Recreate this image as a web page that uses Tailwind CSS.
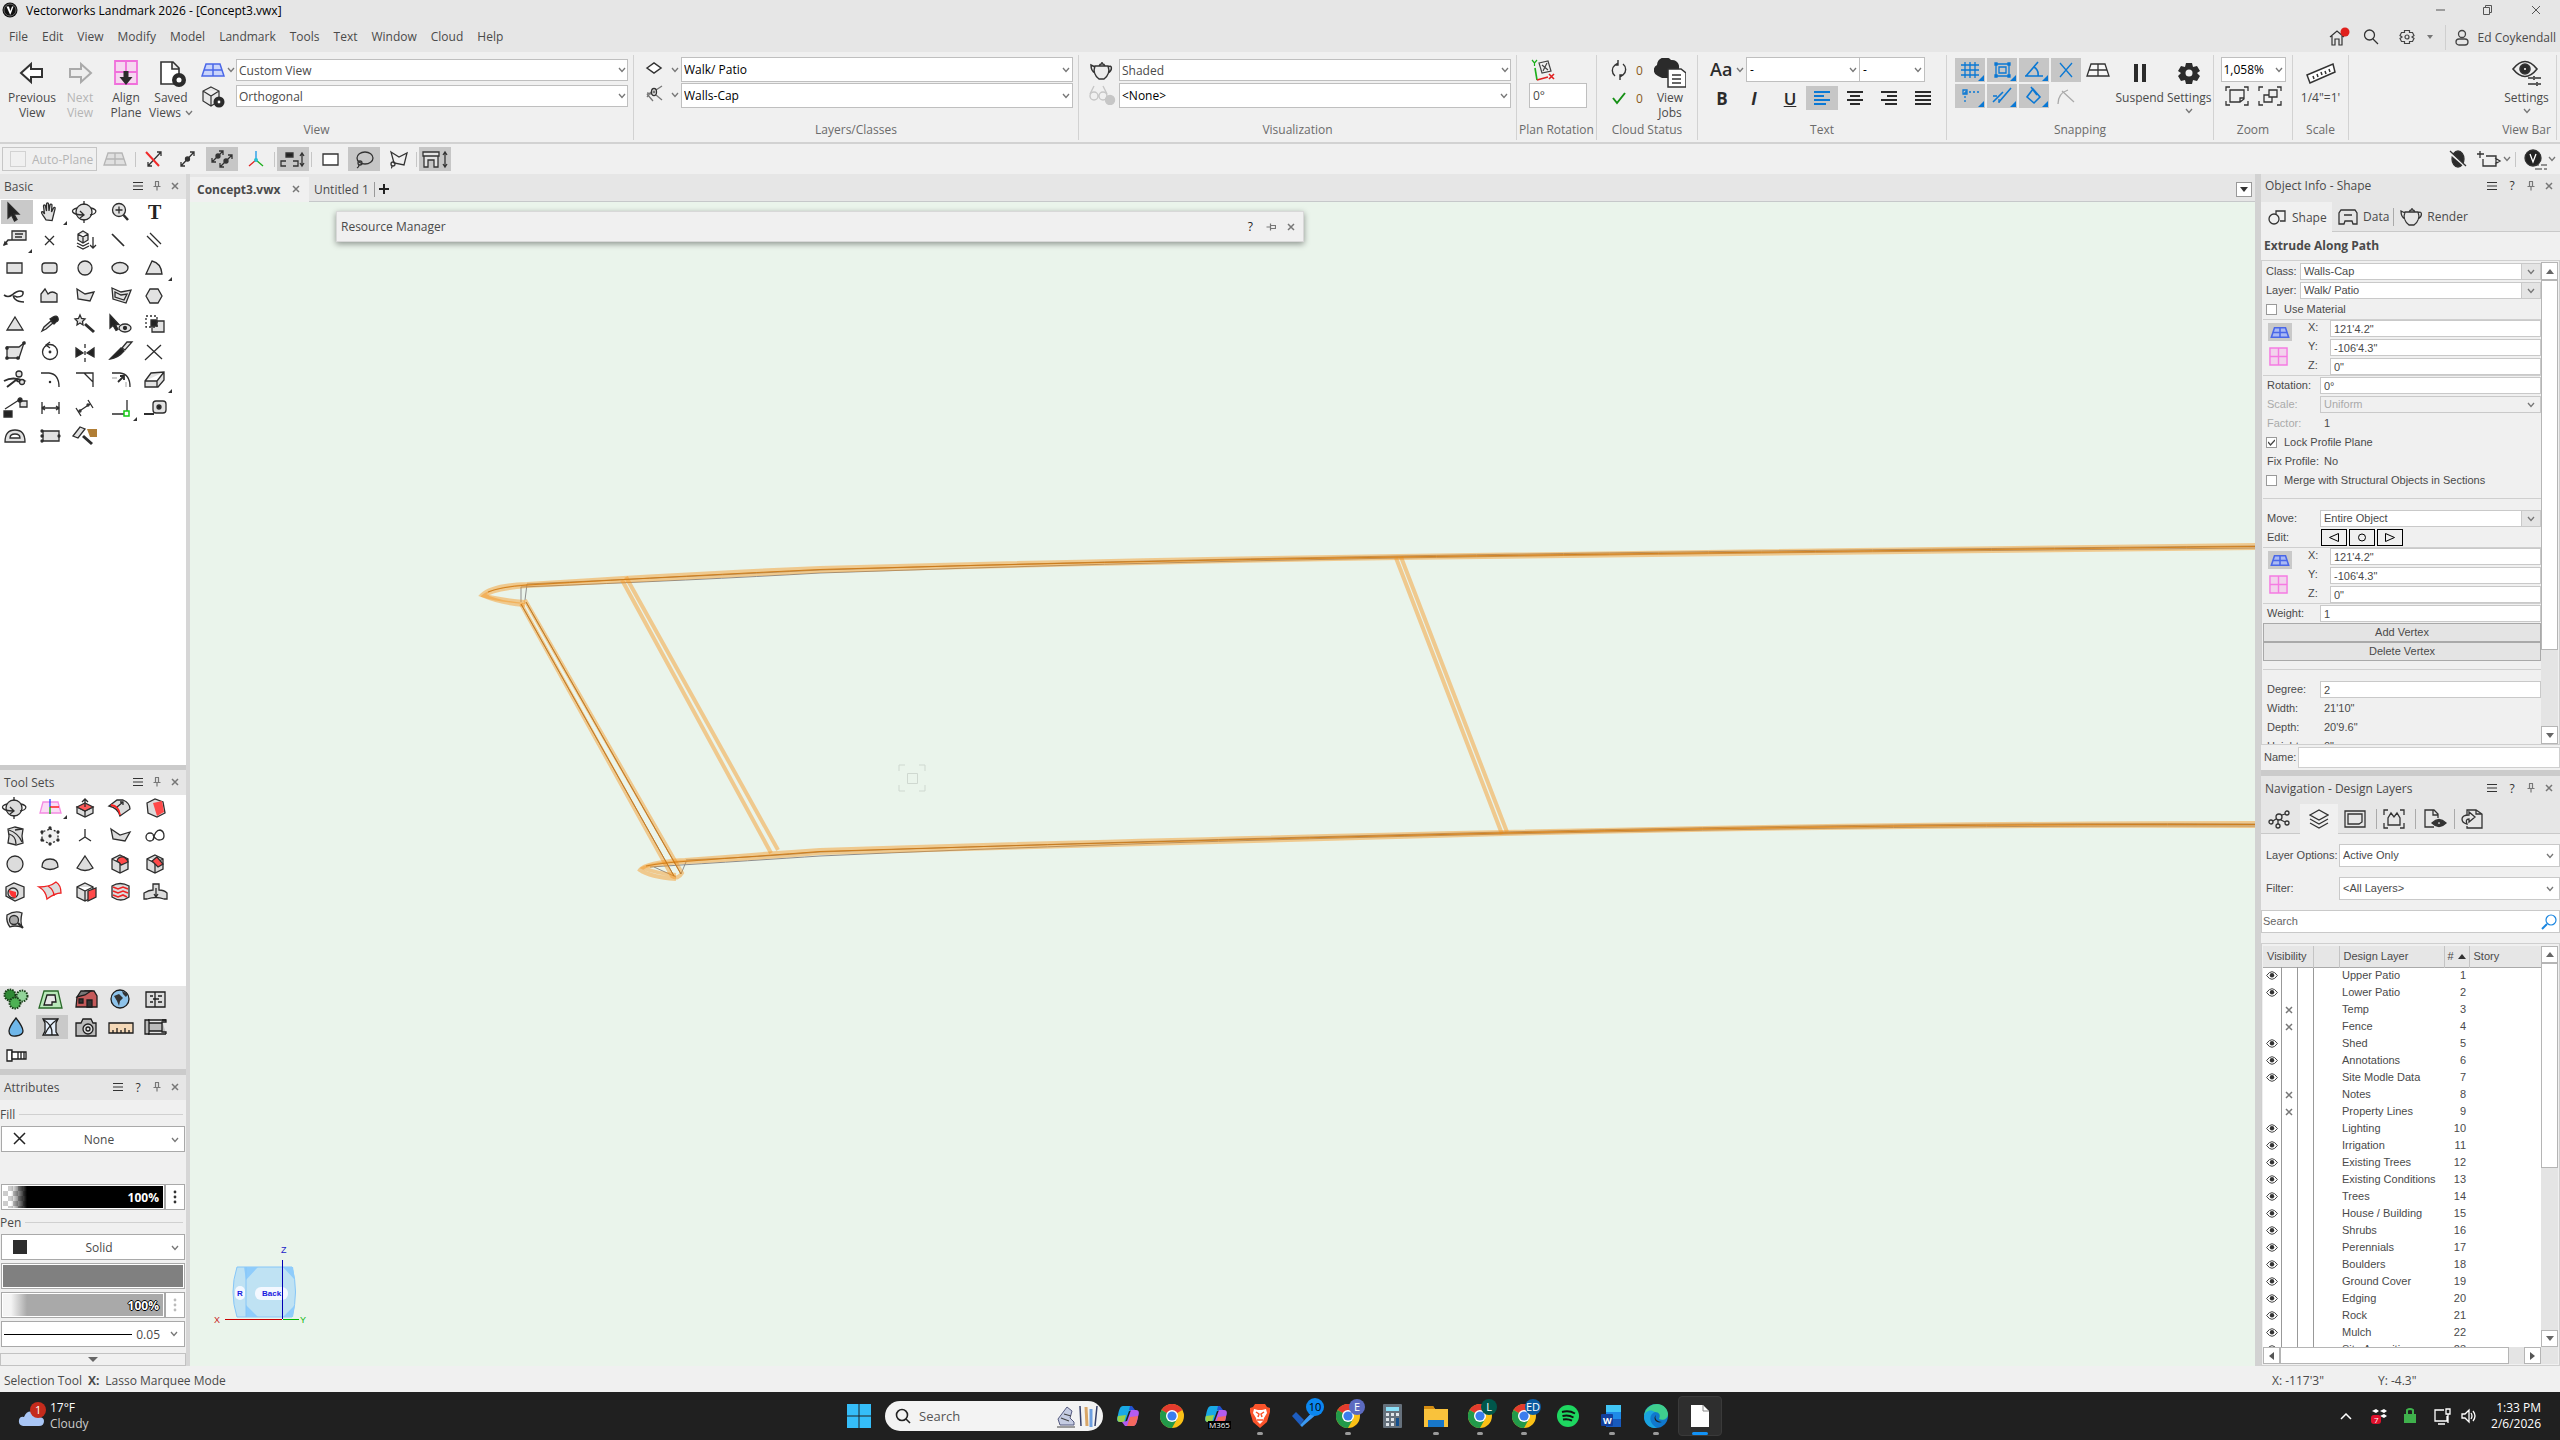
<!DOCTYPE html>
<html lang="en">

<head>
	<meta charset="UTF-8">
	<meta name="viewport" content="width=device-width, initial-scale=1.0">
	<title>Vectorworks Landmark 2026 - [Concept3.vwx]</title>
	<script src="https://cdn.jsdelivr.net/npm/@tailwindcss/browser@4"></script>
</head>

<body class="h-screen flex flex-col overflow-hidden bg-[#e6e6e6] font-['Open_Sans','Noto_Sans',sans-serif] text-[12px] leading-[15px] text-[#4a4a4a]">

	<!-- Shared icons -->
	<svg class="hidden">
		<symbol id="chev" viewBox="0 0 8 6"><path d="M1 1l3 3.500 3-3.500" fill="none" stroke="#777" stroke-width="1.300" /></symbol>
		<symbol id="menu" viewBox="0 0 10 10"><path d="M0 1.500h10M0 5h10M0 8.500h10" stroke="#333" stroke-width="1.200" /></symbol>
		<symbol id="pin" viewBox="0 0 8 10"><path d="M2 .5h4M2.500.5v5M5.500.5v5M.5 5.500h7M4 5.500v4" fill="none" stroke="#777" stroke-width="1.200" /></symbol>
		<symbol id="close" viewBox="0 0 8 8"><path d="M1 1l6 6M7 1l-6 6" stroke="#777" stroke-width="1.500" /></symbol>
		<symbol id="eye" viewBox="0 0 12 9"><path d="M.6 4.500q5.400-7.600 10.800 0q-5.400 7.600-10.800 0z" fill="#fff" stroke="#444" /><circle cx="6" cy="4.300" r="2.200" fill="#333" /></symbol>
		<symbol id="plane" viewBox="0 0 24 14"><path d="M5 1h14l4 12H1zM3 7h18M12 1v12" /></symbol>
		<symbol id="front" viewBox="0 0 20 20"><path d="M1 1h18v18H1zM10 1v18M1 10h18" /></symbol>
		<symbol id="teapot" viewBox="0 0 24 20"><path d="M5 5h13c2 5 0 10-4 13H9C5 15 3 10 5 5zM5 6L1 4c0 4 2 7 4 8M18 6c4-3 5 3 0 6M9 5c1-3 5-3 6 0M12 1v2" /></symbol>
		<symbol id="orbit" viewBox="0 0 28 24"><circle cx="13" cy="12" r="8" /><path fill="none" d="M6 8C-2 10 1 15 12 15M20 8c8 2 5 6-1 7M13 1v4M13 19v4M9 11l4 4-4 3" /></symbol>
		<symbol id="cube" viewBox="0 0 28 24"><path d="M14 3l8 4v10l-8 4-8-4V7zM6 7l8 4 8-4M14 11v10" /></symbol>
		<symbol id="chrome" viewBox="0 0 24 24"><circle cx="12" cy="12" r="12" fill="#fbc116" /><path d="M12 12L1.600 6A12 12 0 0122.400 6z" fill="#e33b2e" /><path d="M12 12L1.600 6A12 12 0 0012 24l5-9z" fill="#229a4a" /><circle cx="12" cy="12" r="6" fill="#fff" /><circle cx="12" cy="12" r="4.600" fill="#3b7ded" /></symbol>
		<symbol id="copilot" viewBox="0 0 24 24"><path d="M7 2h8l3 4-5 1-4 11H4c-4 0-3-4-2-7C3 6 4 2 7 2z" fill="#19a9e5" /><path d="M2 12l8-1-2 7H4c-3 0-3-3-2-6z" fill="#9ad14b" /><path d="M17 22H9l-3-4 5-1 4-11h5c4 0 3 4 2 7-1 5-2 9-5 9z" fill="#b45cf0" /><path d="M22 12l-8 1-3 9h6c3 0 4-5 5-10z" fill="#f4685e" /><path d="M14 2h2l3 4h-6z" fill="#2453d3" /></symbol>
	</svg>

	<!-- Title bar -->
	<header class="flex h-[22px] shrink-0 items-center justify-between pr-[18px] pb-[2px] pl-[2px] text-black">
		<h1 class="flex items-center gap-2">
			<svg class="h-4 w-4" viewBox="0 0 16 16"><circle cx="8" cy="8" r="7.500" fill="#111" /><circle cx="8" cy="8" r="6" fill="none" stroke="#999" stroke-width=".6" /><path d="M4.500 4.500h2.500l1.300 4.500L10 4.500h1.500l-3 8H8z" fill="#fff" /></svg>
			Vectorworks Landmark 2026 - [Concept3.vwx]
		</h1>
		<div class="flex items-center gap-9">
			<button aria-label="Minimize"><svg class="h-3 w-3" viewBox="0 0 12 12"><path d="M2 6h9" stroke="#555" /></svg></button>
			<button aria-label="Restore"><svg class="h-3 w-3" viewBox="0 0 12 12" fill="none" stroke="#555"><path d="M1.500 3.500h6v7h-6zM3.500 3.500v-2h6v7h-2" /></svg></button>
			<button aria-label="Close"><svg class="h-3 w-3" viewBox="0 0 12 12"><path d="M2 2l8 8M10 2l-8 8" stroke="#555" /></svg></button>
		</div>
	</header>

	<!-- Menu -->
	<nav class="flex h-[30px] shrink-0 items-center pr-1 pl-[9px]">
		<div class="flex gap-[14px] pb-px">
			<button>File</button><button>Edit</button><button>View</button><button>Modify</button><button>Model</button><button>Landmark</button><button>Tools</button><button>Text</button><button>Window</button><button>Cloud</button><button>Help</button>
		</div>
		<div class="ml-auto flex h-full items-center">
			<button class="mr-3" aria-label="Home"><svg class="h-5 w-6" viewBox="0 0 24 20" fill="none" stroke="#333" stroke-width="1.200"><path d="M3 10l7-6 7 6M5 9v9h3v-6h4v6h3V9" /><circle cx="18" cy="5" r="4.500" fill="#e0201c" stroke="none" /></svg></button>
			<button class="mr-5" aria-label="Search"><svg class="h-4 w-4" viewBox="0 0 16 16" fill="none" stroke="#333" stroke-width="1.300"><circle cx="6.500" cy="6" r="5" /><path d="M10 10l5 5" /></svg></button>
			<button class="mr-3 flex items-center gap-3" aria-label="Preferences"><svg class="h-4 w-4" viewBox="0 0 16 16" fill="none" stroke="#444" stroke-width="1.200"><path d="M5.500 1.500h5v2l3 0 1.500 3-2 1.500 2 1.500-1.500 3h-3v2h-5v-2h-3L1 9.500 3 8 1 6.500l1.500-3h3z" /><circle cx="8" cy="8" r="2" /></svg><svg class="h-[5px] w-[6px]" viewBox="0 0 6 5"><path d="M0 0h6L3 4z" fill="#777" /></svg></button>
			<button class="flex h-[25px] items-center gap-2 border-l border-[#cfcfcf] pl-2"><svg class="h-[17px] w-4" viewBox="0 0 16 17" fill="none" stroke="#444" stroke-width="1.300"><circle cx="8" cy="5" r="3.500" /><rect x="2" y="10" width="12" height="6" rx="3" /></svg>Ed Coykendall</button>
		</div>
	</nav>

	<!-- View bar -->
	<div class="flex h-[92px] shrink-0 border-b-2 border-[#d2d2d2] bg-[#f0f0f0] pt-[3px] pb-[2px]">
		<section class="flex w-[634px] shrink-0 flex-col border-r border-[#d2d2d2]">
			<div class="flex h-[67px] pl-2">
				<button class="flex w-12 flex-col items-center pt-[3px]"><svg class="h-8 w-8 shrink-0" viewBox="0 0 32 32" fill="#fff" stroke="#333" stroke-width="2"><path d="M5 15l10-9v5h11v8H15v5z" /></svg>Previous<br>View</button>
				<button class="flex w-12 flex-col items-center pt-[3px] text-[#b5b5b5]"><svg class="h-8 w-8 shrink-0" viewBox="0 0 32 32" fill="#eee" stroke="#aaa" stroke-width="2"><path d="M27 15L17 6v5H6v8h11v5z" /></svg>Next<br>View</button>
				<button class="flex w-11 flex-col items-center pt-[3px]"><svg class="h-8 w-8 shrink-0" viewBox="0 0 32 32"><path d="M5 3h22v23H5zM16 3v23M5 14h22" fill="#f6d6f0" stroke="#f06fdb" stroke-width="1.800" /><path d="M13.500 13h5v6h4L16 27l-6.500-8h4z" fill="#2b2b2b" /></svg>Align<br>Plane</button>
				<button class="flex w-[46px] flex-col items-center pt-[3px]"><svg class="h-8 w-8 shrink-0" viewBox="0 0 32 32" fill="#fff" stroke="#333" stroke-width="1.600"><path d="M6 4h12l6 6v16H6zM17 4v7h7" /><circle cx="24" cy="22" r="7" fill="#2b2b2b" stroke="none" /><circle cx="24" cy="22" r="2.500" stroke="none" /></svg>Saved<span class="flex items-center gap-1">Views<svg class="h-[6px] w-2"><use href="#chev" /></svg></span></button>
				<div class="flex w-[42px] flex-col pt-1 pl-[7px]">
					<button class="flex h-[22px] items-center gap-[2px]" aria-label="Standard views"><svg class="h-[14px] w-6 fill-[#c9d4fb] stroke-[#4a67e8] stroke-[1.5]"><use href="#plane" /></svg><svg class="h-[6px] w-2"><use href="#chev" /></svg></button>
					<button class="mt-[3px] h-[26px]" aria-label="Projection"><svg class="h-6 w-6" viewBox="0 0 24 24" fill="#e8e8e8" stroke="#333" stroke-width="1.200"><path d="M10 2l8 4v10l-8 5-8-5V6zM2 6l8 5 8-5M10 11v10" /><circle cx="18" cy="17" r="5.500" fill="#2b2b2b" stroke="none" /><circle cx="18" cy="17" r="2" fill="#fff" /></svg></button>
				</div>
				<div class="flex w-[392px] flex-col gap-1 pt-1">
					<label class="relative flex h-[22px]"><select aria-label="View" class="w-full appearance-none border border-[#bfbfbf] bg-white pl-[2px]"><option>Custom View</option></select><svg class="absolute top-2 right-[2px] h-[6px] w-2"><use href="#chev" /></svg></label>
					<label class="relative flex h-[22px]"><select aria-label="Projection" class="w-full appearance-none border border-[#bfbfbf] bg-white pl-[2px]"><option>Orthogonal</option></select><svg class="absolute top-2 right-[2px] h-[6px] w-2"><use href="#chev" /></svg></label>
				</div>
			</div>
			<h2 class="text-center text-[#6b6b6b]">View</h2>
		</section>
		<section class="flex w-[445px] shrink-0 flex-col border-r border-[#d2d2d2]">
			<div class="flex h-[67px] pt-[2px]">
				<div class="flex w-[47px] flex-col pl-[10px]">
					<button class="flex h-[25px] items-center gap-[7px]" aria-label="Layers"><svg class="h-5 w-5" viewBox="0 0 20 20" fill="#fff" stroke="#333" stroke-width="1.500"><path d="M3 8l7-5 7 5-7 5z" /></svg><svg class="h-[6px] w-2"><use href="#chev" /></svg></button>
					<button class="flex h-[25px] items-center gap-[7px]" aria-label="Classes"><svg class="h-5 w-5" viewBox="0 0 20 20" fill="none" stroke="#777" stroke-width="1.300"><path d="M3 8l5 1M3 9l6 7M12 10l6 5M12 5l6-4M3 12l4-5" /><ellipse cx="10" cy="7" rx="2.500" ry="3.500" stroke="#333" /><circle cx="10" cy="7" r=".8" fill="#333" /></svg><svg class="h-[6px] w-2"><use href="#chev" /></svg></button>
				</div>
				<div class="flex w-[392px] flex-col gap-px text-black">
					<label class="relative flex h-[25px]"><select aria-label="Active layer" class="w-full appearance-none border border-[#bfbfbf] bg-white pl-[2px]"><option>Walk/ Patio</option></select><svg class="absolute top-[10px] right-[3px] h-[6px] w-2"><use href="#chev" /></svg></label>
					<label class="relative flex h-[25px]"><select aria-label="Active class" class="w-full appearance-none border border-[#bfbfbf] bg-white pl-[2px]"><option>Walls-Cap</option></select><svg class="absolute top-[10px] right-[3px] h-[6px] w-2"><use href="#chev" /></svg></label>
				</div>
			</div>
			<h2 class="text-center text-[#6b6b6b]">Layers/Classes</h2>
		</section>
		<section class="flex w-[438px] shrink-0 flex-col border-r border-[#d2d2d2]">
			<div class="flex h-[67px] pt-[2px]">
				<div class="flex w-10 flex-col items-center pl-[6px]">
					<svg class="mt-1 h-5 w-6 fill-[#ececec] stroke-[#333] stroke-[1.5]"><use href="#teapot" /></svg>
					<svg class="mt-1 h-5 w-7" viewBox="0 0 28 20" fill="none" stroke="#c6c6c6" stroke-width="1.400"><circle cx="6" cy="11" r="4" /><circle cx="15" cy="11" r="4" /><path d="M2 9l4-8M19 9l-4-8M10 11h1" /><circle cx="22" cy="15" r="4.500" fill="#c6c6c6" /></svg>
				</div>
				<div class="flex w-[392px] flex-col pt-[2px]">
					<label class="relative flex h-[22px]"><select aria-label="Render mode" class="w-full appearance-none border border-[#bfbfbf] bg-white pl-[2px]"><option>Shaded</option></select><svg class="absolute top-2 right-[2px] h-[6px] w-2"><use href="#chev" /></svg></label>
					<label class="relative mt-[2px] flex h-[25px] text-black"><select aria-label="Data visualization" class="w-full appearance-none border border-[#bfbfbf] bg-white pl-[2px]"><option>&lt;None&gt;</option></select><svg class="absolute top-[10px] right-[3px] h-[6px] w-2"><use href="#chev" /></svg></label>
				</div>
			</div>
			<h2 class="text-center text-[#6b6b6b]">Visualization</h2>
		</section>
		<section class="flex w-20 shrink-0 flex-col border-r border-[#d2d2d2]">
			<div class="flex h-[67px] flex-col pl-3">
				<svg class="mt-1 h-6 w-7" viewBox="0 0 28 24" fill="none" stroke="#444" stroke-width="1.200"><path d="M10 4l9-2 3 10-9 2zM13 6l6 5M18 4l-4 8" /><path d="M6 9l2 12" stroke="#1aae1a" stroke-width="1.600" /><path d="M8 21l11-3M20 15l5 5M25 15l-5 5" stroke="#e01f1f" stroke-width="1.600" /><path d="M3 1l2.500 3L8 1M5.500 4v3" stroke="#1aae1a" /></svg>
				<input aria-label="Rotation angle" value="0°" class="h-[25px] w-[58px] border border-[#bfbfbf] bg-white pl-[3px]">
			</div>
			<h2 class="text-center whitespace-nowrap text-[#6b6b6b]">Plan Rotation</h2>
		</section>
		<section class="flex w-[101px] shrink-0 flex-col border-r border-[#d2d2d2]">
			<div class="flex h-[67px]">
				<div class="flex w-[49px] flex-col gap-2 pt-[5px] pl-3">
					<span class="flex items-center gap-[7px] text-[#8a5a20]"><svg class="h-5 w-5" viewBox="0 0 20 20" fill="none" stroke="#333" stroke-width="1.400"><path d="M6 16a7 7 0 010-11l3-2M9 0v5H6M14 4a7 7 0 010 11l-3 2M11 20v-5h3" /></svg>0</span>
					<span class="flex items-center gap-[7px] text-[#8a5a20]"><svg class="h-5 w-5" viewBox="0 0 20 20" fill="none" stroke="#159015" stroke-width="2"><path d="M4 10l4 5 8-10" /></svg>0</span>
				</div>
				<button class="flex w-12 flex-col items-center pt-[3px]"><svg class="h-8 w-8 shrink-0" viewBox="0 0 32 32" fill="#2b2b2b"><path d="M4 18a6 6 0 01-1-11 8 8 0 0114-5 7 7 0 018 8v4H14v6H8z" /><path d="M14 11h13l5 4v14H14z" fill="#fff" stroke="#333" stroke-width="1.500" /><path d="M18 17h9M18 21h9M18 25h9" stroke="#333" stroke-width="1.500" /></svg>View<br>Jobs</button>
			</div>
			<h2 class="text-center text-[#6b6b6b]">Cloud Status</h2>
		</section>
		<section class="flex w-[249px] shrink-0 flex-col border-r border-[#d2d2d2]">
			<div class="flex h-[67px] flex-col gap-1 pt-[2px] pl-3">
				<div class="flex items-center text-black">
					<button class="flex w-9 items-center gap-1 text-[18px] font-semibold text-[#2b2b2b]">Aa<svg class="h-[6px] w-2 shrink-0"><use href="#chev" /></svg></button>
					<label class="relative flex h-[25px] w-[114px]"><select aria-label="Font" class="w-full appearance-none border border-[#bfbfbf] bg-white pl-[3px]"><option>-</option></select><svg class="absolute top-[10px] right-[3px] h-[6px] w-2"><use href="#chev" /></svg></label>
					<label class="relative flex h-[25px] w-[65px]"><select aria-label="Font size" class="w-full appearance-none border border-l-0 border-[#bfbfbf] bg-white pl-[3px]"><option>-</option></select><svg class="absolute top-[10px] right-[3px] h-[6px] w-2"><use href="#chev" /></svg></label>
				</div>
				<div class="flex h-6 items-center text-[17px] text-[#2b2b2b]">
					<button class="w-6 font-bold">B</button><button class="ml-2 w-6 font-bold italic">I</button><button class="ml-3 w-6 font-semibold underline">U</button>
					<button class="ml-1 flex h-6 w-8 items-center justify-center bg-[#c6c6c6]" aria-label="Align left"><svg class="h-4 w-4" viewBox="0 0 16 16"><path d="M0 2h16M0 6h10M0 10h16M0 14h12" stroke="#0a78d4" stroke-width="1.800" /></svg></button>
					<button class="ml-[9px] w-4" aria-label="Align center"><svg class="h-4 w-4" viewBox="0 0 16 16"><path d="M0 2h16M3 6h10M0 10h16M3 14h10" stroke="#2b2b2b" stroke-width="1.800" /></svg></button>
					<button class="ml-[18px] w-4" aria-label="Align right"><svg class="h-4 w-4" viewBox="0 0 16 16"><path d="M0 2h16M6 6h10M0 10h16M4 14h12" stroke="#2b2b2b" stroke-width="1.800" /></svg></button>
					<button class="ml-[18px] w-4" aria-label="Justify"><svg class="h-4 w-4" viewBox="0 0 16 16"><path d="M0 2h16M0 6h16M0 10h16M0 14h16" stroke="#2b2b2b" stroke-width="1.800" /></svg></button>
				</div>
			</div>
			<h2 class="text-center text-[#6b6b6b]">Text</h2>
		</section>
		<section class="flex w-[267px] shrink-0 flex-col border-r border-[#d2d2d2]">
			<div class="flex h-[67px] pl-2">
				<div class="grid grid-cols-[30px_30px_30px_30px_30px] content-start gap-[2px] pt-[3px] fill-none stroke-[#0a78d4] stroke-[1.3]">
					<button class="h-6 bg-[#c6c6c6]" aria-label="Snap to grid"><svg viewBox="0 0 30 24"><path d="M6 7h18M6 12h18M6 17h18M10 4v16M15 4v16M20 4v16" /><path d="M29 17v6h-6z" fill="#0a78d4" stroke="none" /></svg></button>
					<button class="h-6 bg-[#c6c6c6]" aria-label="Snap to object"><svg viewBox="0 0 30 24"><path d="M9 6h13v12H9zM12 9h7v6h-7z" /><path d="M8 5h2v2H8zM21 5h2v2h-2zM8 17h2v2H8zM21 17h2v2h-2z" fill="#0a78d4" /><path d="M29 17v6h-6z" fill="#0a78d4" stroke="none" /></svg></button>
					<button class="h-6 bg-[#c6c6c6]" aria-label="Snap to angle"><svg viewBox="0 0 30 24"><path d="M6 18h18M7 18L19 4M15 9a9 9 0 014 9" stroke-width="1.600" /><path d="M29 17v6h-6z" fill="#0a78d4" stroke="none" /></svg></button>
					<button class="h-6 bg-[#c6c6c6]" aria-label="Snap to intersection"><svg viewBox="0 0 30 24"><path d="M9 5l12 14M21 5L9 19" /></svg></button>
					<button class="h-6 fill-[#f8f8f8] stroke-[#333]" aria-label="Snap to working plane"><svg class="mx-auto h-[14px] w-6"><use href="#plane" /></svg></button>
					<button class="h-6 bg-[#c6c6c6]" aria-label="Smart points"><svg viewBox="0 0 30 24"><path d="M10 8v11M10 8h14" stroke-dasharray="2 2" /><path d="M8 6h4v4H8z" /><path d="M29 17v6h-6z" fill="#0a78d4" stroke="none" /></svg></button>
					<button class="h-6 bg-[#c6c6c6]" aria-label="Smart edge"><svg viewBox="0 0 30 24"><path d="M6 18L16 8M12 18L24 4" stroke-width="1.600" /><path d="M6 12h4M12 15v4" /><path d="M29 17v6h-6z" fill="#0a78d4" stroke="none" /></svg></button>
					<button class="h-6 bg-[#c6c6c6]" aria-label="Snap to distance"><svg viewBox="0 0 30 24"><path d="M14 5l7 8-6 6-7-6zM12 3l6 8" stroke-width="1.600" /><path d="M29 17v6h-6z" fill="#0a78d4" stroke="none" /></svg></button>
					<button class="h-6 stroke-[#aaa]" aria-label="Snap to tangent"><svg viewBox="0 0 30 24"><path d="M7 20c0-8 4-12 10-14M11 7l12 11" /></svg></button>
				</div>
				<button class="ml-px flex w-[52px] flex-col items-center pt-[3px]"><svg class="h-8 w-8 shrink-0" viewBox="0 0 32 32"><path d="M10 6h4v18h-4zM18 6h4v18h-4z" fill="#2b2b2b" /></svg>Suspend</button>
				<button class="flex w-12 flex-col items-center pt-[3px]"><svg class="h-8 w-8 shrink-0" viewBox="0 0 32 32"><path d="M13 5h6l1 4 4-1 3 5-3 2 3 3-3 5-4-1-1 4h-6l-1-4-4 1-3-5 3-3-3-2 3-5 4 1z" fill="#2b2b2b" /><circle cx="16" cy="15" r="3.500" fill="#f0f0f0" /></svg>Settings<svg class="mt-[3px] h-[6px] w-2"><use href="#chev" /></svg></button>
			</div>
			<h2 class="text-center text-[#6b6b6b]">Snapping</h2>
		</section>
		<section class="flex w-[79px] shrink-0 flex-col border-r border-[#d2d2d2]">
			<div class="flex h-[67px] flex-col items-center pt-[2px] text-black">
				<label class="relative flex h-[25px] w-[65px]"><select aria-label="Zoom" class="w-full appearance-none border border-[#bfbfbf] bg-white pl-[2px]"><option>1,058%</option></select><svg class="absolute top-[10px] right-[3px] h-[6px] w-2"><use href="#chev" /></svg></label>
				<div class="mt-1 flex gap-[9px] fill-none stroke-[#333] stroke-[1.3]">
					<button aria-label="Fit to page"><svg class="h-5 w-6" viewBox="0 0 24 20"><path d="M1 5V1h4M19 1h4v4M23 15v4h-4M5 19H1v-4M5 4h14v9l-4 3H5zM19 12h-4v4" /></svg></button>
					<button aria-label="Fit to objects"><svg class="h-5 w-6" viewBox="0 0 24 20"><path d="M1 5V1h4M19 1h4v4M23 15v4h-4M5 19H1v-4M11 4h8v7h-8zM11 9H6v7h8v-5" /></svg></button>
				</div>
			</div>
			<h2 class="text-center text-[#6b6b6b]">Zoom</h2>
		</section>
		<section class="flex w-14 shrink-0 flex-col border-r border-[#d2d2d2]">
			<div class="flex h-[67px] flex-col items-center pt-[3px]"><svg class="h-8 w-8 shrink-0" viewBox="0 0 32 32" fill="#fff" stroke="#333" stroke-width="1.500"><path d="M2 17L28 6l2 8L5 25zM8 18l1 3M12 16l1 3M16 14l1 3M20 13l1 3M24 11l1 3" /></svg>1/4"=1'</div>
			<h2 class="text-center text-[#6b6b6b]">Scale</h2>
		</section>
		<section class="mr-[3px] ml-auto flex w-[60px] shrink-0 flex-col border-r border-[#d2d2d2]">
			<button class="flex h-[67px] flex-col items-center pt-[3px]"><svg class="h-8 w-8 shrink-0" viewBox="0 0 32 32" fill="none" stroke="#333" stroke-width="1.600"><path d="M2 11q12-15 24 0-12 15-24 0z" /><circle cx="14" cy="11" r="5" fill="#2b2b2b" /><circle cx="14" cy="11" r="1" fill="#fff" stroke="none" /><path d="M17 20h5M24 20h6M17 26h8M27 26h3M23 18v4M26 24v4" /></svg>Settings<svg class="mt-[3px] h-[6px] w-2"><use href="#chev" /></svg></button>
			<h2 class="text-center whitespace-nowrap text-[#6b6b6b]">View Bar</h2>
		</section>
	</div>

	<!-- Tool mode bar -->
	<div class="flex h-[30px] shrink-0 items-center bg-[#f0f0f0] pr-1 pl-[2px] fill-none stroke-[#333] stroke-[1.3]">
		<label class="flex h-6 w-[95px] items-center gap-[6px] border border-[#c6c6c6] pl-[7px] text-[#b5b5b5]"><input type="checkbox" disabled class="h-4 w-4 appearance-none border border-[#d2d2d2]">Auto-Plane</label>
		<svg class="mx-[6px] h-[14px] w-6 fill-[#e0e0e0] stroke-[#b5b5b5]"><use href="#plane" /></svg>
		<i class="mx-[2px] h-[15px] w-px bg-[#c6c6c6]"></i>
		<button class="h-6 w-8" aria-label="No scaling"><svg viewBox="0 0 32 24"><path d="M10 19L23 5M19 5h4v4M10 15v4h4" /><path d="M8 5l13 14" stroke="#f02a2a" stroke-width="2" /></svg></button>
		<button class="ml-[2px] h-6 w-8" aria-label="Single scaling"><svg viewBox="0 0 32 24"><path d="M9 19L22 5M18 5h4v4M9 15v4h4" /><circle cx="15.500" cy="12" r="2" fill="#333" /></svg></button>
		<button class="ml-[2px] h-6 w-8 bg-[#c6c6c6]" aria-label="Multiple scaling"><svg viewBox="0 0 32 24"><path d="M6 15L17 4M13 4h4v4M6 11v4h4M14 20L26 8M22 8h4v4M14 16v4h4" /><circle cx="12" cy="9" r="2" fill="#333" /><circle cx="20" cy="14" r="2" fill="#333" /></svg></button>
		<button class="ml-[2px] h-6 w-8" aria-label="Triad"><svg viewBox="0 0 32 24"><path d="M16 4v9" stroke="#1596e8" /><path d="M16 13l-7 6" stroke="#e01f1f" /><path d="M16 13l7 6" stroke="#1aae1a" /><circle cx="16" cy="13" r="2" fill="#25c1d0" stroke="none" /></svg></button>
		<i class="mx-[2px] h-[15px] w-px bg-[#c6c6c6]"></i>
		<button class="h-6 w-8 bg-[#c6c6c6]" aria-label="Wall insertion"><svg viewBox="0 0 32 24"><path d="M9 6h7v4H9z" fill="#222" /><path d="M9 14H4v5h5M16 14h5v5h-5M25 7v11M23 9l2-3 2 3M23 16l2 3 2-3" /></svg></button>
		<i class="mx-[2px] h-[15px] w-px bg-[#c6c6c6]"></i>
		<button class="h-6 w-8" aria-label="Rectangle marquee"><svg viewBox="0 0 32 24"><path d="M9 7h15v11H9z" fill="#fff" /></svg></button>
		<button class="ml-[2px] h-6 w-8 bg-[#c6c6c6]" aria-label="Lasso marquee"><svg viewBox="0 0 32 24"><ellipse cx="17" cy="11" rx="8" ry="6" /><circle cx="12" cy="16" r="2" /><path d="M11 18q0 2-2 3" /></svg></button>
		<button class="ml-[2px] h-6 w-8" aria-label="Polygon marquee"><svg viewBox="0 0 32 24"><path d="M9 5l8 5 8-4-3 12-10-2z" /><circle cx="11" cy="17" r="2" /><path d="M10 19q0 2-1 2" /></svg></button>
		<i class="mx-[2px] h-[15px] w-px bg-[#c6c6c6]"></i>
		<button class="h-6 w-8 bg-[#c6c6c6]" aria-label="Interactive scaling"><svg viewBox="0 0 32 24"><path d="M4 5h16v4H4zM5 9v11h4v-7h6v7h4V9M26 6v13M24 8l2-3 2 3M24 17l2 3 2-3" fill="#e4e4e4" /></svg></button>
		<div class="ml-auto flex items-center">
			<svg class="h-6 w-8" viewBox="0 0 32 24"><ellipse cx="15" cy="12" rx="6" ry="8" fill="#2b2b2b" /><path d="M8 7l15 13" stroke="#f0f0f0" stroke-width="2" /><path d="M7 4l16 15" /></svg>
			<svg class="h-6 w-7" viewBox="4 0 28 24"><path d="M9 4v7M6 7h7M15 9h10v10H12V12M24 11l5 3-5 3" /></svg>
			<svg class="h-[6px] w-2"><use href="#chev" /></svg>
			<i class="mx-1 h-[15px] w-px bg-[#c6c6c6]"></i>
			<svg class="h-6 w-7" viewBox="0 0 28 24"><circle cx="13" cy="11" r="8" fill="#222" /><path d="M10 7l3 8 3-8" stroke="#fff" /><path d="M15 18h4M21 18h6M15 22h7M24 22h3" stroke-width="1.200" /></svg>
			<svg class="h-[6px] w-2"><use href="#chev" /></svg>
		</div>
	</div>

	<main class="flex min-h-0 flex-1">

		<!-- Left palettes -->
		<aside class="flex w-[190px] shrink-0 flex-col border-r-4 border-[#d6d6d6] bg-[#f0f0f0]">
			<section class="flex min-h-0 flex-1 flex-col">
				<header class="flex h-[25px] shrink-0 items-center gap-[10px] bg-[#e6e6e6] pr-[7px] pb-px pl-1"><h2 class="mr-auto">Basic</h2><svg class="h-[10px] w-[10px]"><use href="#menu" /></svg><svg class="h-[10px] w-2"><use href="#pin" /></svg><svg class="h-2 w-2"><use href="#close" /></svg></header>
				<div class="grid flex-1 grid-cols-[repeat(5,32px)] content-start gap-x-[3px] gap-y-1 bg-white pt-px pl-px fill-[#e2e2e2] stroke-[#2d2d2d] stroke-[1.3] [&_svg]:h-6 [&_svg]:w-7 [&_svg]:overflow-visible">
					<button class="bg-[#c9c9c9]" aria-label="Selection"><svg><path d="M7 3v15l3.500-3 3 6 2.500-1.500-3-5.500h5z" fill="#222" /></svg></button>
					<button aria-label="Pan"><svg><path d="M10 20c-2-4-5-6-4.500-8 1-1 2 0 3 2l-1-8c0-1.500 1.600-1.500 2 0l1 5V4c0-1.500 2-1.500 2 0l.5 7 1-6c.3-1.400 2-1 2 0l-.5 7 2-4c.6-1 2-.6 1.600.6l-2 8-1 4z" /><path d="M31 21v4h-4z" fill="#333" stroke="none" /></svg></button>
					<button aria-label="Flyover"><svg><use href="#orbit" /></svg></button>
					<button aria-label="Zoom"><svg><circle cx="13" cy="10" r="6.500" /><path d="M9.500 10h7M13 6.500v7" /><path d="M17.500 15l4.500 5" stroke-width="2.500" /></svg></button>
					<button class="stroke-none text-left text-[20px] leading-6 font-bold text-[#222] font-['Liberation_Serif',serif]" aria-label="Text"><span class="pl-[7px]">T</span></button>

					<button aria-label="Callout"><svg><path d="M11 3h14v9H11zM14 6h8M14 9h7M11 12h-4l-4 5" /><path d="M3 17l1-3 2 2z" fill="#333" /><path d="M31 21v4h-4z" fill="#333" stroke="none" /></svg></button>
					<button aria-label="2D locus"><svg><path d="M9 8l9 9M18 8l-9 9" /></svg></button>
					<button aria-label="Extrude"><svg><path d="M12 3l5 3v6l-5 3-5-3V6zM7 6l5 3 5-3M12 9v6" /><path fill="none" d="M6 15l6 3 6-3M6 18l6 3 6-3M22 9v11M19 17l3 3 3-3" /></svg></button>
					<button aria-label="Line"><svg><path d="M6 6l12 12" stroke-width="1.700" /></svg></button>
					<button aria-label="Double line"><svg><path d="M6 8l11 11M9 5l11 11" /></svg></button>

					<button aria-label="Rectangle"><svg><path d="M6 7h15v10H6z" /></svg></button>
					<button aria-label="Rounded rectangle"><svg><rect x="6" y="7" width="15" height="10" rx="3" /></svg></button>
					<button aria-label="Circle"><svg><circle cx="14" cy="12" r="7" /></svg></button>
					<button aria-label="Oval"><svg><ellipse cx="14" cy="12" rx="8" ry="5.500" /></svg></button>
					<button aria-label="Arc"><svg><path d="M5 18l6-13q9 2 10 13z" /><path d="M31 21v4h-4z" fill="#333" stroke="none" /></svg></button>

					<button aria-label="Freehand"><svg><path fill="none" stroke-width="1.600" d="M3 11q4 3 8 0 7-6 11-3 1 5-6 5-6-3-2 2 3 3 9 3" /></svg></button>
					<button aria-label="Polyline"><svg><path d="M5 18V10l4-5 3 5q4-4 9 0v8z" /></svg></button>
					<button aria-label="Polygon"><svg><path d="M6 5l8 5 9-2-4 9-12-2z" /></svg></button>
					<button aria-label="Double polygon"><svg><path d="M6 4l9 4 10-2-5 13-13-4z" /><path d="M9 8l6 3 6-1-3 6-9-3z" /></svg></button>
					<button aria-label="Regular polygon"><svg><path d="M5 12l4-7h8l4 7-4 7H9z" /></svg></button>

					<button aria-label="Triangle"><svg><path d="M14 5l8 13H6z" /></svg></button>
					<button aria-label="Eyedropper"><svg><path d="M6 19l2-4 7-6 2 2-7 6z" /><path d="M14 7l3-2q4-2 5 1t-2 4l-2 2z" fill="#222" /></svg></button>
					<button aria-label="Magic wand"><svg><path d="M9 3l1.500 3.500L14 7l-2.500 2.500L12 13l-3-2-3 2 .5-3.500L4 7l3.500-.5z" /><path d="M14 12l9 8" stroke-width="3" /></svg></button>
					<button aria-label="Visibility"><svg><path d="M4 3v13l3-2.500 3 5 2-1-2.500-5H13z" fill="#222" /><ellipse cx="19" cy="16" rx="6" ry="4" /><circle cx="19" cy="16" r="1.500" fill="#222" /></svg></button>
					<button aria-label="Select similar"><svg><path d="M11 9h12v11H11z" /><path d="M10 8h6v6h-6z" fill="#222" /><path d="M5 4h11v11H5z" fill="none" stroke-dasharray="2 2" /></svg></button>

					<button aria-label="Reshape"><svg><path d="M6 7h12l5-4-5 15H6z" /><g fill="#222"><circle cx="6" cy="8" r="1.200" /><circle cx="6" cy="18" r="1.200" /><circle cx="17" cy="18" r="1.200" /><circle cx="23" cy="3" r="1.200" /></g></svg></button>
					<button aria-label="Rotate"><svg><circle cx="14" cy="12" r="7.500" fill="none" /><circle cx="14" cy="12" r=".8" fill="#222" /><path d="M14 2l-4 3 4 3" fill="none" /></svg></button>
					<button aria-label="Mirror"><svg><path d="M5 8v9l7-4zM23 8v9l-7-4z" fill="#222" /><path d="M14 4v4M14 11v4M14 18v4" /></svg></button>
					<button aria-label="Split"><svg><path d="M4 19l11-11 3 3q-6 7-14 8z" fill="#222" /><path d="M16 8l5-6h5l-7 8z" /></svg></button>
					<button aria-label="Trim"><svg><path d="M4 20L20 5M6 5l15 14" /></svg></button>

					<button aria-label="Clip"><svg><path d="M3 13q9-5 20 0-5 2-8-1L6 19" fill="none" stroke-width="2" /><circle cx="18" cy="6" r="3" /><circle cx="21" cy="14" r="2.500" /></svg></button>
					<button aria-label="Fillet"><svg><path d="M5 5h8q10 1 10 14" fill="none" /><circle cx="14" cy="14" r=".6" fill="#222" /></svg></button>
					<button aria-label="Chamfer"><svg><path d="M5 5h8l9 9v5M13 5h9v9" fill="none" /></svg></button>
					<button aria-label="Offset"><svg><path d="M6 5h8q10 1 10 14" fill="none" /><path d="M6 10h5M20 14v5" stroke="#bbb" fill="none" /><path d="M12 14l6-6M14 8h4v4" fill="none" stroke-width="1.800" /></svg></button>
					<button aria-label="Eraser"><svg><path d="M4 13l6-8 13-1v8l-6 7H4zM4 13h12l7-9M16 13v6" /><path d="M31 21v4h-4z" fill="#333" stroke="none" /></svg></button>

					<button aria-label="Move by points"><svg><path d="M4 13L18 4" /><path d="M3 15h8v6H3z" fill="#222" /><path d="M19 5h7v6h-7z" /><circle cx="19" cy="4" r="2" fill="#222" /></svg></button>
					<button aria-label="Linear dimension"><svg><path d="M6 6v12M23 6v12M6 12h17M9 10l-3 2 3 2M20 10l3 2-3 2" fill="none" /></svg></button>
					<button aria-label="Aligned dimension"><svg><path d="M5 12l5 8M17 4l5 8M7 16l12-8" fill="none" /><circle cx="9" cy="15" r="1" /><circle cx="17" cy="9" r="1" /></svg></button>
					<button aria-label="Working plane"><svg><path d="M6 18h15V4" fill="none" /><path d="M18 15h5v5h-5z" fill="#fff" stroke="#13c913" stroke-width="1.500" /><path d="M31 21v4h-4z" fill="#333" stroke="none" /></svg></button>
					<button aria-label="Tape measure"><svg><rect x="12" y="5" width="13" height="12" rx="3" /><circle cx="18" cy="11" r="2" fill="#222" /><path d="M3 18h10" stroke-width="2" /></svg></button>

					<button aria-label="Protractor"><svg><path d="M4 18q0-12 10-12t10 12z" /><path d="M9 14q0-4 5-4t5 4z" fill="#fff" /></svg></button>
					<button aria-label="Plan region"><svg><path d="M7 7h16v10H7z" /><g fill="#222"><circle cx="6" cy="7" r="1" /><circle cx="6" cy="12" r="1" /><circle cx="6" cy="17" r="1" /><circle cx="23" cy="12" r="1" /></g></svg></button>
					<button aria-label="Attribute mapping"><svg><path d="M16 5h10v8h-7z" fill="#b17e35" stroke="none" /><path d="M2 12l7-9 5 2-7 9z" /><path d="M12 12l9 8" stroke-width="3" /></svg></button>
				</div>
			</section>

			<section class="shrink-0 border-t-[5px] border-[#cbcbcb]">
				<header class="flex h-[25px] items-center gap-[10px] bg-[#e6e6e6] pr-[7px] pb-px pl-1"><h2 class="mr-auto">Tool Sets</h2><svg class="h-[10px] w-[10px]"><use href="#menu" /></svg><svg class="h-[10px] w-2"><use href="#pin" /></svg><svg class="h-2 w-2"><use href="#close" /></svg></header>
				<div class="grid h-[191px] grid-cols-[repeat(5,32px)] content-start gap-x-[3px] gap-y-1 bg-white pt-px pl-px fill-[#dcdcdc] stroke-[#2d2d2d] stroke-[1.3] [&_svg]:h-6 [&_svg]:w-7 [&_svg]:overflow-visible">
					<button aria-label="Flyover"><svg><use href="#orbit" /></svg></button>
					<button aria-label="Set working plane"><svg><path d="M7 6h15l3 11H4z" fill="#fadcf4" stroke="#f58be2" /><path d="M14 3v8" stroke="#2440ff" /><path d="M14 11h9" stroke="#f00" /><path d="M14 11v7" stroke="#0b0" /><path d="M31 19v4h-4z" fill="#333" stroke="none" /></svg></button>
					<button aria-label="Push/Pull"><svg><path d="M6 11l8 4 8-4v6l-8 4-8-4z" /><path d="M6 11l8-4 8 4-8 4z" fill="#ff5a5a" /><path d="M14 15v6" /><path d="M14 11V3M11 6l3-3 3 3" fill="none" /></svg></button>
					<button aria-label="Taper face"><svg><path d="M3 10l8-6h6q7 3 7 9l-10 7q-2-8-11-10z" /><path d="M5 9q8 1 9 10" stroke="#f22" fill="none" stroke-width="1.800" /><path d="M11 11l6-5M14 6h3v3" fill="none" /></svg></button>
					<button aria-label="Deform"><svg><path d="M6 7l8-4 8 3 2 11-8 4-9-4z" /><path d="M12 7l9-2 2 11-7 4z" fill="#ff4a4a" stroke="none" /></svg></button>

					<button aria-label="Twist"><svg><path d="M7 5l7-2 8 2-1 7 1 7-7 2-8-2 1-7z" /><path d="M8 6q9 3 13 12M8 10q7 2 7 10M14 6l7-1" fill="none" /></svg></button>
					<button aria-label="Subdivision"><svg><path d="M14 5l8 3v8l-8 4-8-4V8z" fill="#f0f0f0" stroke-dasharray="2 2" /><g fill="#222"><circle cx="14" cy="4" r="1" /><circle cx="22" cy="8" r="1" /><circle cx="6" cy="8" r="1" /><circle cx="6" cy="16" r="1" /><circle cx="22" cy="16" r="1" /><circle cx="14" cy="20" r="1" /><circle cx="14" cy="12" r="1" /></g></svg></button>
					<button aria-label="3D locus"><svg><path d="M14 5v8M14 13l-6 4M14 13l6 4" fill="none" /></svg></button>
					<button aria-label="3D polygon"><svg><path d="M5 5l9 6 10-3-5 9-12-2z" /></svg></button>
					<button aria-label="NURBS curve"><svg><circle cx="9" cy="13" r="4" fill="none" /><path d="M12 16q2-10 7-10 4 1 4 6 0 4-5 4-3 0-6-5" fill="none" /></svg></button>

					<button aria-label="Sphere"><svg><circle cx="14" cy="12" r="8" /></svg></button>
					<button aria-label="Hemisphere"><svg><path d="M6 15q0-8 8-8t8 8q-8 5-16 0z" /></svg></button>
					<button aria-label="Cone"><svg><path d="M14 4l8 12q-8 5-16 0z" /></svg></button>
					<button aria-label="Fillet edge"><svg><use href="#cube" /><path d="M11 9q1-5 7-4 3 2 4 5l-7 3q-1-3-4-4z" fill="#ff4a4a" /></svg></button>
					<button aria-label="Chamfer edge"><svg><use href="#cube" /><path d="M11 9l5-4 6 7-5 3z" fill="#ff4a4a" /></svg></button>

					<button aria-label="Shell solid"><svg><path d="M5 7l8-4 10 4v10l-9 4-9-5z" /><circle cx="12" cy="13" r="5" /><path d="M8 10l7 2v6q-7-1-7-8z" fill="#f33" stroke="none" /></svg></button>
					<button aria-label="Loft surface"><svg><path d="M3 7q11 0 17-5 5 3 5 11-6 0-14 6-1-8-8-12z" stroke="#e22" /><path d="M12 6q6 4 6 10" stroke="#e22" fill="none" /></svg></button>
					<button aria-label="Extract"><svg><use href="#cube" /><path d="M17 11l8-3v9l-8 4z" fill="#ff4a4a" /></svg></button>
					<button aria-label="Section"><svg><path d="M6 6q8-5 17 0v11q-8 6-17 0z" /><path d="M7 7l5 2 5-2 5 2M7 11l5 2 5-2 5 2M7 15l5 2 5-2 4 2" fill="none" stroke="#e22" stroke-width="1.600" /></svg></button>
					<button aria-label="Project"><svg><path d="M3 13q5-3 9-3V4h6v6q5 0 8 3v6h-3q-8-3-17 0H3z" /><path d="M15 8v8M13 14l2 3 2-3" fill="none" /></svg></button>

					<button aria-label="Analysis"><svg><path d="M6 7q8-5 15-2-2 8 0 14-8-2-12 0-4-5-3-12z" /><circle cx="13" cy="12" r="4.500" fill="#aaa" /><path d="M17 15l5 5" stroke-width="2.200" /></svg></button>
				</div>
				<div class="grid h-[83px] grid-cols-[repeat(5,32px)] content-start gap-x-[3px] gap-y-1 bg-[#e6e6e6] pt-px pl-px fill-[#dcdcdc] stroke-[#1d1d1d] stroke-[1.3] [&_svg]:h-6 [&_svg]:w-7 [&_svg]:overflow-visible">
					<button aria-label="Planting"><svg><g stroke="#173d17" stroke-width="2" stroke-dasharray="1.500 1"><circle cx="9" cy="8" r="5.500" fill="#2f8a35" /><circle cx="21" cy="9" r="5.500" fill="#93d49a" /><circle cx="14" cy="16" r="5.500" fill="#4eb254" /></g></svg></button>
					<button aria-label="Site"><svg><path d="M8 4h14l4 17H3z" fill="#b9e8b9" stroke="#2a6a2a" /><path d="M11 8h8l1 7h-4v3H8z" fill="#e6e6e6" /></svg></button>
					<button aria-label="Building"><svg><path d="M6 10l8-6h9l3 5v11H5z" fill="#c55a5a" /><path d="M6 10l4-6h10l-6 4z" fill="#777" /><path d="M16 13h5v7h-5zM8 12h4v4H8z" fill="#333" /></svg></button>
					<button aria-label="GIS"><svg><circle cx="14" cy="12" r="9" fill="#8ec3ea" /><path d="M8 9l5-2 4 4-3 3-1 5-2-5zM16 4l6 3-2 3-3-3z" fill="#333" stroke="none" /></svg></button>
					<button aria-label="Details"><svg><path d="M5 5h19v15H5zM14 5v15" /><path d="M9 9h3M9 15h3M17 9h4M17 15h4M12 12h6" /></svg></button>
					<button aria-label="Irrigation"><svg><path d="M15 3q7 9 7 13t-7 5-7-5q0-4 7-13z" fill="#6fb7ea" /></svg></button>
					<button class="bg-[#c9c9c9]" aria-label="3D modeling"><svg><path d="M7 4h15l-2 4v9l2 3H7l2-4V8z" fill="#e4eefa" /><path d="M8 5q9 5 8 15M22 4q-9 6-13 15" fill="none" /></svg></button>
					<button aria-label="Visualization"><svg><path d="M5 8h5l2-4h8l2 4h3v13H5z" fill="#bbb" /><circle cx="17" cy="14" r="5" /><circle cx="17" cy="14" r="2" /></svg></button>
					<button aria-label="Dims/Notes"><svg><path d="M3 8h24v10H3z" fill="#f5d9b8" /><path d="M7 18v-3M11 18v-5M15 18v-3M19 18v-5M23 18v-3" /></svg></button>
					<button aria-label="Structural"><svg><path d="M4 5h4v14H4zM8 8h13v8H8zM21 5h4v2h-4v10h4v2" fill="#bbb" /><path d="M7 5h18M7 19h18" /></svg></button>
					<button aria-label="Fasteners"><svg><path d="M6 7h5v11H6z" fill="#fff" /><path d="M11 9h14v7H11zM17 9v7M20 9v7M23 9v7" fill="#fff" /></svg></button>
				</div>
			</section>

			<section class="flex h-[297px] shrink-0 flex-col border-t-[6px] border-[#cbcbcb]">
				<header class="flex h-[25px] shrink-0 items-center gap-[10px] bg-[#e6e6e6] pr-[7px] pb-px pl-1"><h2 class="mr-auto">Attributes</h2><svg class="h-[10px] w-[10px]"><use href="#menu" /></svg><span class="mx-px w-2 text-center text-[#333]">?</span><svg class="h-[10px] w-2"><use href="#pin" /></svg><svg class="h-2 w-2"><use href="#close" /></svg></header>
				<div class="flex min-h-0 flex-1 flex-col overflow-hidden">
					<h3 class="mt-[7px] flex items-center gap-1 pr-[3px]">Fill<i class="h-px flex-1 bg-[#d0d0d0]"></i></h3>
					<label class="relative mx-px mt-1 flex h-[26px] shrink-0"><select aria-label="Fill style" class="w-full appearance-none border border-[#a9a9a9] bg-white pl-3 text-center"><option>None</option></select><svg class="absolute top-[6px] left-3 h-[13px] w-[13px]" viewBox="0 0 13 13"><path d="M1 1l11 11M12 1L1 12" stroke="#222" stroke-width="1.500" /></svg><svg class="absolute top-[11px] right-[6px] h-[6px] w-2"><use href="#chev" /></svg></label>
					<div class="mx-px mt-8 flex h-[26px] shrink-0">
						<button class="w-[164px] border border-[#a9a9a9] bg-white p-px"><span class="block h-full bg-[repeating-conic-gradient(#ccc_0_25%,#fff_0_50%)] bg-[length:10px_10px]"><span class="flex h-full items-center justify-end bg-[linear-gradient(90deg,transparent_8px,#000_24px)] pr-1 font-bold text-white">100%</span></span></button>
						<button class="flex-1 border border-[#a9a9a9] bg-white" aria-label="Opacity options"><svg class="mx-auto h-4 w-1" viewBox="0 0 4 16" fill="#333"><circle cx="2" cy="3" r="1.400" /><circle cx="2" cy="8" r="1.400" /><circle cx="2" cy="13" r="1.400" /></svg></button>
					</div>
					<h3 class="mt-[5px] flex items-center gap-1 pr-[3px]">Pen<i class="h-px flex-1 bg-[#d0d0d0]"></i></h3>
					<label class="relative mx-px mt-1 flex h-[26px] shrink-0"><select aria-label="Pen style" class="w-full appearance-none border border-[#a9a9a9] bg-white pl-3 text-center"><option>Solid</option></select><i class="absolute top-[6px] left-3 h-[14px] w-[14px] bg-[#2d2d2d]"></i><svg class="absolute top-[11px] right-[6px] h-[6px] w-2"><use href="#chev" /></svg></label>
					<button class="mx-px mt-[3px] h-[26px] shrink-0 border border-[#a9a9a9] bg-white p-px" aria-label="Pen color"><span class="block h-full bg-[#808080]"></span></button>
					<div class="mx-px mt-[3px] flex h-[26px] shrink-0">
						<button class="w-[164px] border border-[#a9a9a9] bg-white p-px"><span class="flex h-full items-center justify-end bg-[linear-gradient(90deg,#f4f4f4_8px,#a9a9a9_24px)] pr-1 font-bold text-white [text-shadow:1px_0_#000,-1px_0_#000,0_1px_#000,0_-1px_#000]">100%</span></button>
						<button class="flex-1 border border-[#a9a9a9] bg-white" aria-label="Pen opacity options"><svg class="mx-auto h-4 w-1" viewBox="0 0 4 16" fill="#bbb"><circle cx="2" cy="3" r="1.400" /><circle cx="2" cy="8" r="1.400" /><circle cx="2" cy="13" r="1.400" /></svg></button>
					</div>
					<button class="mx-px mt-[3px] flex h-[26px] shrink-0 items-center gap-1 border border-[#a9a9a9] bg-white pr-[6px] pl-[2px]"><i class="h-px flex-1 bg-black"></i>0.05<svg class="ml-[6px] h-[6px] w-2"><use href="#chev" /></svg></button>
				</div>
				<button class="flex h-[13px] shrink-0 items-center justify-center border border-[#c2c2c2]" aria-label="More attributes"><svg class="h-[5px] w-[10px]" viewBox="0 0 10 5"><path d="M0 0h10L5 5z" fill="#666" /></svg></button>
			</section>
		</aside>

		<!-- Document window -->
		<section class="flex min-w-0 flex-1 flex-col">
			<div class="flex h-7 shrink-0 items-center border-b border-[#c6c8ca] pr-[3px]">
				<button class="mt-[3px] flex h-[25px] w-[119px] items-center gap-3 bg-[#f0f0f0] pl-[7px] font-bold">Concept3.vwx<svg class="h-2 w-2"><use href="#close" /></svg></button>
				<button class="mt-[3px] flex h-[15px] w-[66px] items-center border-r border-[#999] pl-[5px] whitespace-nowrap">Untitled 1</button>
				<button class="mt-[3px] ml-1" aria-label="New document"><svg class="h-[10px] w-[10px]" viewBox="0 0 10 10"><path d="M5 0v10M0 5h10" stroke="#222" stroke-width="2" /></svg></button>
				<button class="mt-1 ml-auto flex h-[15px] w-4 items-center justify-center border border-[#999] bg-white" aria-label="Open documents"><svg class="h-[5px] w-2" viewBox="0 0 8 5"><path d="M0 0h8L4 5z" fill="#333" /></svg></button>
			</div>
			<div class="relative min-h-0 flex-1 bg-[#eaf4eb]">
				<svg class="h-full w-full" viewBox="190 202 2065 1164" preserveAspectRatio="xMinYMin slice" fill="none">
					<!-- object edges -->
					<g stroke="#8d8d8d">
						<path d="M521 602V587Q700 580 820 573Q1100 563 1398 558T2255 548" />
						<path d="M525 600L527 584Q700 576 820 570Q1100 561 1398 556T2255 546" />
						<path d="M521 604L674 876M526 602L681 874M654 867L676 877M681 874L686 862" />
						<path d="M650 867Q760 860 820 856Q1100 843 1504 834T2255 826" />
						<path d="M686 860Q760 857 820 852Q1100 842 1504 832T2255 824" />
					</g>
					<!-- highlighted extrude edges -->
					<g stroke="#f7951d" stroke-opacity=".45" stroke-width="4">
						<path d="M525 602Q498 600 482 595Q492 585 527 584Q700 573 820 568Q1100 560 1398 556T2255 545" />
						<path d="M525 605Q500 603 484 596Q492 589 527 586Q700 577 820 571Q1100 563 1398 558T2255 548" />
						<path d="M676 879Q650 877 640 870Q646 862 685 860Q760 854 820 850Q1100 841 1504 832T2255 823" />
						<path d="M676 875Q655 873 644 868Q652 864 685 862Q760 858 820 853Q1100 844 1504 834T2255 826" />
						<path d="M521 604L672 876Q678 880 682 873L525 600" />
						<path d="M622 580L771 853M626 577L778 850" />
						<path d="M1396 558L1502 834M1401 557L1507 832" />
					</g>
					<g stroke="#c4720f" stroke-opacity=".75">
						<path d="M488 592Q500 587 527 585Q700 575 820 569.500Q1100 561.500 1398 557T2255 546.500" />
						<path d="M646 866Q660 863 690 861Q760 856 820 851.500Q1100 842.500 1504 833T2255 824.500" />
						<path d="M521 604L674 876M526 602L681 874" />
					</g>
					<!-- cursor -->
					<g stroke="#cfd8d0"><path d="M899 771v-6h6M919 765h6v6M925 785v6h-6M905 791h-6v-6" /><path d="M907.500 773.500h10v10h-10z" /></g>
					<!-- view cube -->
					<path d="M237 1267h55q7 25 0 50h-55q-8-25 0-50z" fill="#bfe2f3" stroke="#86c6f8" />
					<path d="M244 1267h14l-12 13zM283 1267h10l2 13zM246 1305l12 12h-12zM295 1305l-12 12h10z" fill="#8fccfb" />
					<path d="M246 1267v50" stroke="#86c6f8" />
					<rect x="255" y="1287" width="33" height="13" rx="6" fill="#f3f8ff" /><rect x="235" y="1286" width="10" height="14" rx="5" fill="#f3f8ff" />
					<path d="M282.500 1260v59" stroke="#0000b4" /><path d="M225 1319.500h57" stroke="#c80000" /><path d="M283 1319.500h16" stroke="#00b400" />
					<g font-family="Liberation Sans, sans-serif" font-size="8" font-weight="bold" fill="#1818e0"><text x="262" y="1296">Back</text><text x="237" y="1296">R</text></g>
					<g font-family="Liberation Sans, sans-serif" font-size="9"><text x="281" y="1253" fill="#2222c8">Z</text><text x="214" y="1323" fill="#c82222">X</text><text x="300" y="1323" fill="#11b811">Y</text></g>
				</svg>

				<div class="absolute top-[9px] left-[146px] flex h-[31px] w-[968px] items-center gap-[10px] border border-[#d8d8d8] bg-[#f0f0f0] pr-2 pl-1 shadow-[0_2px_6px_rgba(0,0,0,0.4)]"><h2 class="mr-auto">Resource Manager</h2><span class="mr-1 text-[#222]">?</span><svg class="mr-[2px] h-[10px] w-2 rotate-90"><use href="#pin" /></svg><svg class="h-2 w-2"><use href="#close" /></svg></div>
			</div>
		</section>

		<!-- Right palettes -->
		<aside class="flex w-[305px] shrink-0 flex-col border-l-[6px] border-[#d2d2d2] bg-[#f0f0f0]">
			<section class="flex shrink-0 flex-col">
				<header class="flex h-7 items-center gap-[10px] bg-[#e6e6e6] pr-[7px] pb-[5px] pl-1"><h2 class="mr-auto">Object Info - Shape</h2><svg class="h-[10px] w-[10px]"><use href="#menu" /></svg><span class="mx-px w-2 text-center text-[#333]">?</span><svg class="h-[10px] w-2"><use href="#pin" /></svg><svg class="h-2 w-2"><use href="#close" /></svg></header>
				<div class="flex h-[30px] bg-[#e6e6e6] fill-none stroke-[#333] stroke-[1.3]">
					<button class="flex w-[71px] items-center gap-[5px] bg-[#f0f0f0] pl-[6px]"><svg class="h-[18px] w-[20px]"><path d="M9 7V3h9v10h-5" /><circle cx="7" cy="11" r="5" /></svg>Shape</button>
					<div class="flex flex-1 items-center border-b border-[#c9c9c9] pl-[6px]"><button class="flex items-center gap-[5px] border-r border-[#aaa] pr-1"><svg class="h-[18px] w-5"><path d="M3 2h14l2 3v11h-4l-1-3H7l-1 3H1V5zM6 7h8" /></svg>Data</button><button class="flex items-center gap-[3px] pl-[6px]"><svg class="h-5 w-6"><use href="#teapot" /></svg>Render</button></div>
				</div>
				<h3 class="h-7 pt-[6px] pl-[3px] font-bold">Extrude Along Path</h3>
				<div class="flex h-[485px] border border-[#cfcfcf] pt-px pr-px font-['Liberation_Sans',Arial,sans-serif] text-[11px]">
					<div class="flex-1 overflow-hidden pl-px [&>*]:h-[19px]">
						<label class="flex items-center pl-[3px]"><span class="w-[34px]">Class:</span><span class="relative flex flex-1"><select class="h-[17px] w-full appearance-none border border-[#c9c9c9] bg-white pl-[3px]"><option>Walls-Cap</option></select><span class="absolute top-0 right-0 flex h-[17px] w-5 items-center justify-center border border-[#c9c9c9] bg-[#e4e4e4]"><svg class="h-[6px] w-2"><use href="#chev" /></svg></span></span></label>
						<label class="flex items-center pl-[3px]"><span class="w-[34px]">Layer:</span><span class="relative flex flex-1"><select class="h-[17px] w-full appearance-none border border-[#c9c9c9] bg-white pl-[3px]"><option>Walk/ Patio</option></select><span class="absolute top-0 right-0 flex h-[17px] w-5 items-center justify-center border border-[#c9c9c9] bg-[#e4e4e4]"><svg class="h-[6px] w-2"><use href="#chev" /></svg></span></span></label>
						<label class="flex items-center gap-[7px] pl-[3px]"><input type="checkbox" class="h-[11px] w-[11px] appearance-none border border-[#999] bg-white">Use Material</label>
						<div class="grid h-[57px]! grid-cols-[41px_26px_1fr] grid-rows-[19px_19px_17px] border-y border-[#cfcfcf]">
							<div class="row-span-3 flex flex-col gap-[6px] pt-[3px] pl-[5px]"><span class="flex h-[18px] w-6 items-center justify-center bg-[#c9c9c9]"><svg class="h-[11px] w-[22px] fill-[#a9b9f5] stroke-[#4a67e8] stroke-2"><use href="#plane" /></svg></span><svg class="ml-px h-[19px] w-[19px] fill-[#f2d3ec] stroke-[#f57be2] stroke-[1.5]"><use href="#front" /></svg></div>
							<label for="x1" class="pl-1">X:</label><input id="x1" value="121'4.2&quot;" class="h-[17px] border border-[#c9c9c9] bg-white pl-[3px]">
							<label for="y1" class="pl-1">Y:</label><input id="y1" value="-106'4.3&quot;" class="h-[17px] border border-[#c9c9c9] bg-white pl-[3px]">
							<label for="z1" class="pl-1">Z:</label><input id="z1" value="0&quot;" class="h-[17px] border border-[#c9c9c9] bg-white pl-[3px]">
						</div>
						<label class="flex items-center pl-1"><span class="w-[53px]">Rotation:</span><input value="0°" class="h-[17px] flex-1 border border-[#c9c9c9] bg-white pl-[3px]"></label>
						<label class="relative flex items-center pl-1 text-[#aaa]"><span class="w-[53px]">Scale:</span><select disabled class="h-[17px] flex-1 appearance-none border border-[#c9c9c9] bg-[#f0f0f0] pl-[3px]"><option>Uniform</option></select><svg class="absolute top-[7px] right-[6px] h-[6px] w-2"><use href="#chev" /></svg></label>
						<p class="flex items-center pl-1"><span class="w-[57px] text-[#aaa]">Factor:</span>1</p>
						<label class="relative flex items-center gap-[7px] pl-[3px]"><input type="checkbox" checked class="h-[11px] w-[11px] appearance-none border border-[#999] bg-white"><svg class="absolute top-[6px] left-[5px] h-[7px] w-[7px]" viewBox="0 0 7 7"><path d="M0 3l2.500 3L7 1" fill="none" stroke="#444" stroke-width="1.300" /></svg>Lock Profile Plane</label>
						<p class="flex items-center pl-1"><span class="w-[57px]">Fix Profile:</span>No</p>
						<label class="flex items-center gap-[7px] pl-[3px] whitespace-nowrap"><input type="checkbox" class="h-[11px] w-[11px] appearance-none border border-[#999] bg-white">Merge with Structural Objects in Sections</label>
						<div class="pt-2"><hr class="border-[#cfcfcf]"></div>
						<label class="flex items-center pl-1"><span class="w-[53px]">Move:</span><span class="relative flex flex-1"><select class="h-[17px] w-full appearance-none border border-[#c9c9c9] bg-white pl-[3px]"><option>Entire Object</option></select><span class="absolute top-0 right-0 flex h-[17px] w-5 items-center justify-center border border-[#c9c9c9] bg-[#e4e4e4]"><svg class="h-[6px] w-2"><use href="#chev" /></svg></span></span></label>
						<div class="flex items-center gap-[2px] pl-1 fill-none stroke-black"><span class="w-[52px]">Edit:</span>
							<button class="h-[17px] w-[26px] border border-black" aria-label="Previous vertex"><svg class="mx-auto h-[11px] w-3"><path d="M1.500 5.500l9-4v8z" /></svg></button>
							<button class="h-[17px] w-[26px] border border-black" aria-label="Vertex mode"><svg class="mx-auto h-[11px] w-3"><circle cx="6" cy="5.500" r="3.500" /></svg></button>
							<button class="h-[17px] w-[26px] border border-black" aria-label="Next vertex"><svg class="mx-auto h-[11px] w-3"><path d="M10.500 5.500l-9-4v8z" /></svg></button>
						</div>
						<div class="grid h-[57px]! grid-cols-[41px_26px_1fr] grid-rows-[19px_19px_17px] border-y border-[#cfcfcf]">
							<div class="row-span-3 flex flex-col gap-[6px] pt-[3px] pl-[5px]"><span class="flex h-[18px] w-6 items-center justify-center bg-[#c9c9c9]"><svg class="h-[11px] w-[22px] fill-[#a9b9f5] stroke-[#4a67e8] stroke-2"><use href="#plane" /></svg></span><svg class="ml-px h-[19px] w-[19px] fill-[#f2d3ec] stroke-[#f57be2] stroke-[1.5]"><use href="#front" /></svg></div>
							<label for="x2" class="pl-1">X:</label><input id="x2" value="121'4.2&quot;" class="h-[17px] border border-[#c9c9c9] bg-white pl-[3px]">
							<label for="y2" class="pl-1">Y:</label><input id="y2" value="-106'4.3&quot;" class="h-[17px] border border-[#c9c9c9] bg-white pl-[3px]">
							<label for="z2" class="pl-1">Z:</label><input id="z2" value="0&quot;" class="h-[17px] border border-[#c9c9c9] bg-white pl-[3px]">
						</div>
						<label class="flex items-center pl-1"><span class="w-[53px]">Weight:</span><input value="1" class="h-[17px] flex-1 border border-[#c9c9c9] bg-white pl-[3px]"></label>
						<button class="block w-full border border-[#a9a9a9] bg-[#e4e4e4]">Add Vertex</button>
						<button class="block w-full border border-[#a9a9a9] bg-[#e4e4e4]">Delete Vertex</button>
						<div class="pt-2"><hr class="border-[#cfcfcf]"></div>
						<label class="flex items-center pl-1"><span class="w-[53px]">Degree:</span><input value="2" class="h-[17px] flex-1 border border-[#c9c9c9] bg-white pl-[3px]"></label>
						<p class="flex items-center pl-1"><span class="w-[57px]">Width:</span>21'10"</p>
						<p class="flex items-center pl-1"><span class="w-[57px]">Depth:</span>20'9.6"</p>
						<p class="flex items-center pl-1"><span class="w-[57px]">Height:</span>0"</p>
					</div>
					<div class="flex w-[17px] flex-col bg-[#e4e4e4]">
						<button class="flex h-[18px] items-center justify-center border border-[#b5b5b5] bg-white" aria-label="Scroll up"><svg class="h-[5px] w-2" viewBox="0 0 8 5"><path d="M0 5h8L4 0z" fill="#666" /></svg></button>
						<i class="h-[370px] border border-[#b5b5b5] bg-white"></i>
						<button class="mt-auto flex h-[18px] items-center justify-center border border-[#b5b5b5] bg-white" aria-label="Scroll down"><svg class="h-[5px] w-2" viewBox="0 0 8 5"><path d="M0 0h8L4 5z" fill="#666" /></svg></button>
					</div>
				</div>
				<label class="my-[2px] flex h-[21px] items-center pl-[3px] font-['Liberation_Sans',Arial,sans-serif] text-[11px]"><span class="w-[34px]">Name:</span><input class="h-[21px] min-w-0 flex-1 border border-[#cfcfcf] bg-white"></label>
			</section>

			<section class="flex min-h-0 flex-1 flex-col border-t-[6px] border-[#cbcbcb] font-['Liberation_Sans',Arial,sans-serif] text-[11px]">
				<header class="flex h-7 shrink-0 items-center gap-[10px] bg-[#e6e6e6] pr-[7px] pb-1 pl-1 font-['Open_Sans','Noto_Sans',sans-serif] text-[12px]"><h2 class="mr-auto">Navigation - Design Layers</h2><svg class="h-[10px] w-[10px]"><use href="#menu" /></svg><span class="mx-px w-2 text-center text-[#333]">?</span><svg class="h-[10px] w-2"><use href="#pin" /></svg><svg class="h-2 w-2"><use href="#close" /></svg></header>
				<div class="flex h-[30px] shrink-0 items-center border-b border-[#c9c9c9] bg-[#e6e6e6] fill-none stroke-[#333] stroke-[1.3]">
					<button class="flex w-[39px] justify-center pr-1" aria-label="Classes"><svg class="h-5 w-[22px]"><circle cx="11" cy="8" r="3" /><circle cx="3" cy="13" r="2" /><circle cx="10" cy="17" r="2" /><circle cx="19" cy="4" r="2" /><circle cx="19" cy="14" r="2" /><path d="M5 12l3-2M14 6l3-1M13 11l4 2M10 11v4" /></svg></button>
					<button class="-mb-px flex h-[30px] w-[38px] items-center justify-center bg-[#f0f0f0] pr-px" aria-label="Design layers"><svg class="h-5 w-5"><path d="M1 6l9-5 9 5-9 5zM1 10l9 5 9-5M1 14l9 5 9-5" /></svg></button>
					<button class="flex w-[38px] justify-center pr-1" aria-label="Sheet layers"><svg class="h-5 w-[22px]"><path d="M1 2h20v16H1zM4 5h14v8l-3 2H4z" /></svg></button>
					<button class="flex w-[39px] justify-center border-l border-[#aaa] pr-1" aria-label="Viewports"><svg class="h-5 w-[22px]"><path d="M1 6V1h4M17 1h4v5M21 14v5h-4M5 19H1v-5M5 16V9l3-5 3 4 3-4 3 5v7z" /></svg></button>
					<button class="flex w-[39px] justify-center border-l border-[#aaa] pr-px" aria-label="Saved views"><svg class="h-5 w-6"><path d="M11 18H2V1h9l4 4v4M10 1v5h5" /><path d="M9 14q7-7 14 0-7 7-14 0z" fill="#333" /><circle cx="16" cy="14" r="1.500" fill="#fff" /></svg></button>
					<button class="flex w-[39px] justify-center border-l border-[#aaa] pr-1" aria-label="References"><svg class="h-5 w-[22px]"><path d="M6 6V1h9l6 4v14H6v-2M15 1v4h6" /><path d="M6 15q-5-1-5-5t7-4V3l6 5-6 5v-3q-4 0-2 5z" /></svg></button>
				</div>
				<label class="mt-[10px] flex h-[23px] shrink-0 items-center pl-[5px]"><span class="w-[73px]">Layer Options:</span><span class="relative flex flex-1"><select class="h-[23px] w-full appearance-none border border-[#c9c9c9] bg-white pl-[3px]"><option>Active Only</option></select><svg class="absolute top-[9px] right-[6px] h-[6px] w-2"><use href="#chev" /></svg></span></label>
				<label class="mt-[10px] flex h-[23px] shrink-0 items-center pl-[5px]"><span class="w-[73px]">Filter:</span><span class="relative flex flex-1"><select class="h-[23px] w-full appearance-none border border-[#c9c9c9] bg-white pl-[3px]"><option>&lt;All Layers&gt;</option></select><svg class="absolute top-[9px] right-[6px] h-[6px] w-2"><use href="#chev" /></svg></span></label>
				<label class="relative mt-[10px] flex h-[23px] shrink-0"><input placeholder="Search" aria-label="Search layers" class="w-full border border-[#c9c9c9] bg-white pl-px placeholder:text-[#666]"><svg class="absolute top-1 right-[3px] h-4 w-4" viewBox="0 0 16 16" fill="none" stroke="#1a86e0"><circle cx="10" cy="6" r="5" stroke-width="1.200" /><path d="M6 10l-5 5" stroke-width="2" /></svg></label>
				<div class="mt-[10px] flex min-h-0 flex-1 flex-col border border-[#cfcfcf] pt-[2px] pr-px pl-px">
					<div class="flex min-h-0 flex-1 bg-white">
						<div class="flex-1 overflow-hidden">
							<table class="w-full table-fixed border-collapse text-left">
								<colgroup><col class="w-[18px]"><col class="w-4"><col class="w-4"><col class="w-[26px]"><col class="w-[105px]"><col class="w-[25px]"><col></colgroup>
								<thead class="bg-[#e6e6e6]">
									<tr class="h-[21px] border-b border-[#aaa]"><th colspan="3" class="border-r border-[#c4c4c4] pl-1 font-normal">Visibility</th><th class="border-r border-[#c4c4c4]"></th><th class="border-r border-[#c4c4c4] pl-1 font-normal">Design Layer</th><th class="border-r border-[#c4c4c4] font-normal"><span class="flex items-center gap-1 pl-[3px]">#<svg class="h-[5px] w-2" viewBox="0 0 8 5"><path d="M0 5h8L4 0z" fill="#333" /></svg></span></th><th class="pl-1 font-normal">Story</th></tr>
								</thead>
								<tbody id="layers"></tbody>
							</table>
						</div>
						<div class="flex w-[17px] flex-col bg-[#e4e4e4]">
							<button class="flex h-[17px] items-center justify-center border border-[#b5b5b5] bg-white" aria-label="Scroll up"><svg class="h-[5px] w-2" viewBox="0 0 8 5"><path d="M0 5h8L4 0z" fill="#666" /></svg></button>
							<i class="h-[205px] border border-[#b5b5b5] bg-white"></i>
							<button class="mt-auto flex h-[17px] items-center justify-center border border-[#b5b5b5] bg-white" aria-label="Scroll down"><svg class="h-[5px] w-2" viewBox="0 0 8 5"><path d="M0 0h8L4 5z" fill="#666" /></svg></button>
						</div>
					</div>
					<div class="mb-px flex h-[17px] shrink-0 bg-[#e4e4e4] pr-[17px]">
						<button class="flex w-[17px] items-center justify-center border border-[#b5b5b5] bg-white" aria-label="Scroll left"><svg class="h-2 w-[5px]" viewBox="0 0 5 8"><path d="M5 0v8L0 4z" fill="#555" /></svg></button>
						<i class="w-[229px] border border-[#b5b5b5] bg-white"></i>
						<button class="ml-auto flex w-[17px] items-center justify-center border border-[#b5b5b5] bg-white" aria-label="Scroll right"><svg class="h-2 w-[5px]" viewBox="0 0 5 8"><path d="M0 0v8l5-4z" fill="#555" /></svg></button>
					</div>
				</div>
			</section>
		</aside>
	</main>

	<!-- Status bar -->
	<footer class="flex h-[26px] shrink-0 items-center bg-[#f0f0f0] pt-[3px] pl-1">
		<span>Selection Tool</span><b class="mx-[6px]">X:</b><span>Lasso Marquee Mode</span>
		<span class="ml-auto w-[106px]">X: -117'3"</span><span class="w-[182px]">Y: -4.3"</span>
	</footer>

	<!-- Windows taskbar -->
	<div class="flex h-12 shrink-0 items-center bg-[#202020] leading-4 text-white">
		<div class="flex flex-1 items-center gap-1 pl-[18px]">
			<svg class="h-7 w-7" viewBox="0 0 28 28"><path d="M5 24q-5-1-4-6 1-4 5-3 3-7 9-5 4 1 5 5 6 0 6 4 0 5-5 5z" fill="#a9c6f5" /><circle cx="20" cy="8" r="8" fill="#c42b1c" /><text x="17" y="12" font-size="11" fill="#fff">1</text></svg>
			<p>17°F<br><span class="text-[#ccc]">Cloudy</span></p>
		</div>
		<div class="flex h-full shrink-0 items-center">
			<button class="mr-1 flex w-11 justify-center" aria-label="Start"><svg class="h-6 w-6" viewBox="0 0 24 24" fill="#35bdf8"><path d="M0 0h11.500v11.500H0zM12.500 0H24v11.500H12.500zM0 12.500h11.500V24H0zM12.500 12.500H24V24H12.500z" /></svg></button>
			<label class="mr-[3px] flex h-[30px] w-[218px] items-center gap-2 rounded-full bg-[#f3f3f3] pr-1 pl-[10px]"><svg class="h-4 w-4 shrink-0" viewBox="0 0 16 16" fill="none" stroke="#222" stroke-width="1.600"><circle cx="7" cy="7" r="5.500" /><path d="M11 11l4 4" /></svg><input placeholder="Search" aria-label="Search" class="w-full text-[13px] placeholder:text-[#555]"><svg class="h-6 w-11 shrink-0" viewBox="0 0 44 24"><path d="M3 15l9-12 5 4-2 7 4 4v3H5z" fill="#c5cce2" stroke="#555a80" /><path d="M2 23h18M6 14l8 3M9 10l7 2" stroke="#444" stroke-width="1.200" /><path d="M25 2l1 20M42 2l-2 20" stroke="#36406a" stroke-width="1.500" /><path d="M31 3l1 19" stroke="#d9a667" stroke-width="3" /><path d="M36 5v18" stroke="#6e9fe0" stroke-width="3" /></svg></label>
			<button class="flex w-11 justify-center" aria-label="Copilot"><svg class="h-6 w-6"><use href="#copilot" /></svg></button>
			<button class="flex w-11 justify-center" aria-label="Chrome"><svg class="h-6 w-6"><use href="#chrome" /></svg></button>
			<button class="relative flex w-11 justify-center" aria-label="Microsoft 365 Copilot"><svg class="h-6 w-6"><use href="#copilot" /></svg><span class="absolute top-[17px] left-[14px] bg-black px-px text-[8px] leading-2">M365</span></button>
			<button class="relative flex h-full w-11 items-center justify-center" aria-label="Brave"><svg class="h-6 w-[22px]" viewBox="0 0 22 24"><path d="M6 0h10l2 3 3 1v4l-3 10-7 6-7-6L1 8V4l3-1z" fill="#fb542b" /><path d="M5 5l4 1h4l4-1 1 4-3 5-1 3-3 3-3-3-1-3-3-5z" fill="#fff" /><path d="M7 8l3 2-1 3M15 8l-3 2 1 3M8 16h6" fill="none" stroke="#fb542b" stroke-width="1.500" /></svg><i class="absolute bottom-[5px] h-[3px] w-[6px] rounded bg-[#9a9a9a]"></i></button>
			<button class="relative flex h-full w-11 items-center justify-center" aria-label="To Do"><svg class="h-6 w-7" viewBox="0 0 28 24"><path d="M2 12l4-4 8 8-4 5z" fill="#1d5dc0" /><path d="M10 21L27 3l1 6-14 12-2 2z" fill="#3a9af5" /></svg><span class="absolute top-[6px] left-6 h-[18px] w-[18px] rounded-full bg-[#0b87f0] text-[11px] leading-[18px] text-black">10</span></button>
			<button class="relative flex h-full w-11 items-center justify-center" aria-label="Chrome E"><svg class="h-6 w-6"><use href="#chrome" /></svg><span class="absolute top-[7px] left-[23px] h-4 w-4 rounded-full bg-[#5c6bc0] text-[11px]">E</span><i class="absolute bottom-[5px] h-[3px] w-[6px] rounded bg-[#9a9a9a]"></i></button>
			<button class="flex w-11 justify-center" aria-label="Calculator"><svg class="h-6 w-[19px]" viewBox="0 0 19 24"><rect width="19" height="24" rx="1" fill="#66717c" /><path d="M3 3h13v4H3z" fill="#8be0f8" /><path d="M3 9h3v3H3zM8 9h3v3H8zM13 9h3v3h-3zM3 14h3v3H3zM8 14h3v3H8zM3 19h3v3H3zM8 19h3v3H8z" fill="#dfe5ea" /><path d="M13 14h3v8h-3z" fill="#14508e" /></svg></button>
			<button class="relative flex h-full w-11 items-center justify-center" aria-label="File Explorer"><svg class="h-[22px] w-6" viewBox="0 0 24 22"><path d="M0 1h9l2 3h13v18H0z" fill="#f9c23c" /><path d="M0 1h9l2 3H0z" fill="#d48c11" /><path d="M4 15h16v7H4z" fill="#1877c9" /></svg><i class="absolute bottom-[5px] h-[3px] w-[6px] rounded bg-[#9a9a9a]"></i></button>
			<button class="relative flex h-full w-11 items-center justify-center" aria-label="Chrome L"><svg class="h-6 w-6"><use href="#chrome" /></svg><span class="absolute top-[7px] left-[23px] h-4 w-4 rounded-full bg-[#00574b] text-[11px]">L</span><i class="absolute bottom-[5px] h-[3px] w-[6px] rounded bg-[#9a9a9a]"></i></button>
			<button class="relative flex h-full w-11 items-center justify-center" aria-label="Chrome ED"><svg class="h-6 w-6"><use href="#chrome" /></svg><span class="absolute top-[7px] left-[23px] h-4 w-4 rounded-full bg-[#0b5aa0] text-[11px]">ED</span><i class="absolute bottom-[5px] h-[3px] w-[6px] rounded bg-[#9a9a9a]"></i></button>
			<button class="flex w-11 justify-center" aria-label="Spotify"><svg class="h-[22px] w-[22px]" viewBox="0 0 22 22"><circle cx="11" cy="11" r="11" fill="#1ed760" /><path d="M5 7q7-2 13 1.500M5.500 11q6-1.500 11 1.500M6 14.500q5-1 9 1.200" fill="none" stroke="#111" stroke-width="1.900" /></svg></button>
			<button class="relative flex h-full w-11 items-center justify-center" aria-label="Word"><svg class="h-6 w-6" viewBox="0 0 24 24"><path d="M6 1h15v8H6z" fill="#41c5f5" /><path d="M6 8h15v8H6z" fill="#1f8ae8" /><path d="M6 15h15v8H6z" fill="#185abd" /><rect x="1" y="10" width="12" height="12" rx="1" fill="#123f9c" /><text x="3" y="19.500" font-size="9" font-weight="bold" fill="#fff">W</text></svg><i class="absolute bottom-[5px] h-[3px] w-[6px] rounded bg-[#9a9a9a]"></i></button>
			<button class="relative flex h-full w-11 items-center justify-center" aria-label="Edge"><svg class="h-6 w-6" viewBox="0 0 24 24"><circle cx="12" cy="12" r="12" fill="#1078ce" /><path d="M0 12C1 3 8 0 13 0c7 0 11 6 11 10 0 5-5 7-9 5 2-4 0-7-4-7-5 0-9 1-11 4z" fill="#3fcf8e" /><path d="M0 13C1 6 7 5 11 8c-6 2-7 11 2 16C6 25 0 20 0 13z" fill="#1aa3e0" /><path d="M12 11c-2 3 1 7 6 7-5 2-10-3-6-7z" fill="#202020" /></svg><i class="absolute bottom-[5px] h-[3px] w-[6px] rounded bg-[#9a9a9a]"></i></button>
			<button class="relative flex h-10 w-11 items-center justify-center rounded border border-[#3a3a3a] bg-[#2e2e2e]" aria-label="Vectorworks"><svg class="h-[22px] w-[18px]" viewBox="0 0 18 22"><path d="M0 0h12l6 6v16H0z" fill="#fff" /><path d="M12 0v6h6" fill="none" stroke="#888" /></svg><i class="absolute bottom-0 h-[3px] w-4 rounded bg-[#1292f5]"></i></button>
		</div>
		<div class="flex flex-1 items-center justify-end gap-[14px] pr-[19px] fill-none stroke-white stroke-[1.3]">
			<svg class="mr-1 h-[7px] w-3" viewBox="0 0 12 7"><path d="M1 6l5-5 5 5" stroke-width="1.500" /></svg>
			<svg class="mr-[2px] h-[18px] w-[18px]" viewBox="0 0 18 18" stroke="none"><path d="M2 4l4-2 3 2-3 2zM10 4l4-2 3 2-3 2zM10 9l4-2 3 2-3 2z" fill="#fff" stroke="none" /><rect x="1" y="8" width="10" height="9" rx="3" fill="#e0102c" stroke="none" /><text x="4" y="15.500" font-size="8" fill="#fff" stroke="none">7</text></svg>
			<svg class="mr-[3px] h-4 w-3" viewBox="0 0 12 16"><path d="M3 7V2q3-2 6 0v5" stroke="#3fb14c" stroke-width="2" /><path d="M0 6h12v9H0z" fill="#3fb14c" stroke="none" /></svg>
			<svg class="h-[17px] w-[18px]" viewBox="0 0 18 17"><path d="M11 2H2v11h12V8M5 16h7M13 1h4v5h-4zM15 6v9" /></svg>
			<svg class="-ml-1 h-4 w-4" viewBox="0 0 16 16"><path d="M1 6h3l4-4v12L4 10H1zM10 5q2 3 0 6M12 3q4 5 0 10" /></svg>
			<p class="stroke-none text-right">1:33 PM<br>2/6/2026</p>
		</div>
	</div>

	<script>
		// [name, visible]
		const layers = [
			['Upper Patio', 1], ['Lower Patio', 1], ['Temp', 0], ['Fence', 0], ['Shed', 1], ['Annotations', 1],
			['Site Modle Data', 1], ['Notes', 0], ['Property Lines', 0], ['Lighting', 1], ['Irrigation', 1],
			['Existing Trees', 1], ['Existing Conditions', 1], ['Trees', 1], ['House / Building', 1], ['Shrubs', 1],
			['Perennials', 1], ['Boulders', 1], ['Ground Cover', 1], ['Edging', 1], ['Rock', 1], ['Mulch', 1], ['Site Amenities', 1]
		];
		document.getElementById('layers').innerHTML = layers.map(([name, visible], i) => `
			<tr class="h-[17px]">
				<td class="border-r border-[#999]">${visible ? '<svg class="mx-auto h-[9px] w-3"><use href="#eye" /></svg>' : ''}</td>
				<td class="border-r border-[#999]">${visible ? '' : '<svg class="mx-auto h-2 w-2"><use href="#close" /></svg>'}</td>
				<td class="border-r border-[#999]"></td>
				<td></td>
				<td class="pl-[3px] whitespace-nowrap">${name}</td>
				<td class="pr-[3px] text-right">${i + 1}</td>
				<td></td>
			</tr>`).join('');
	</script>
</body>

</html>
